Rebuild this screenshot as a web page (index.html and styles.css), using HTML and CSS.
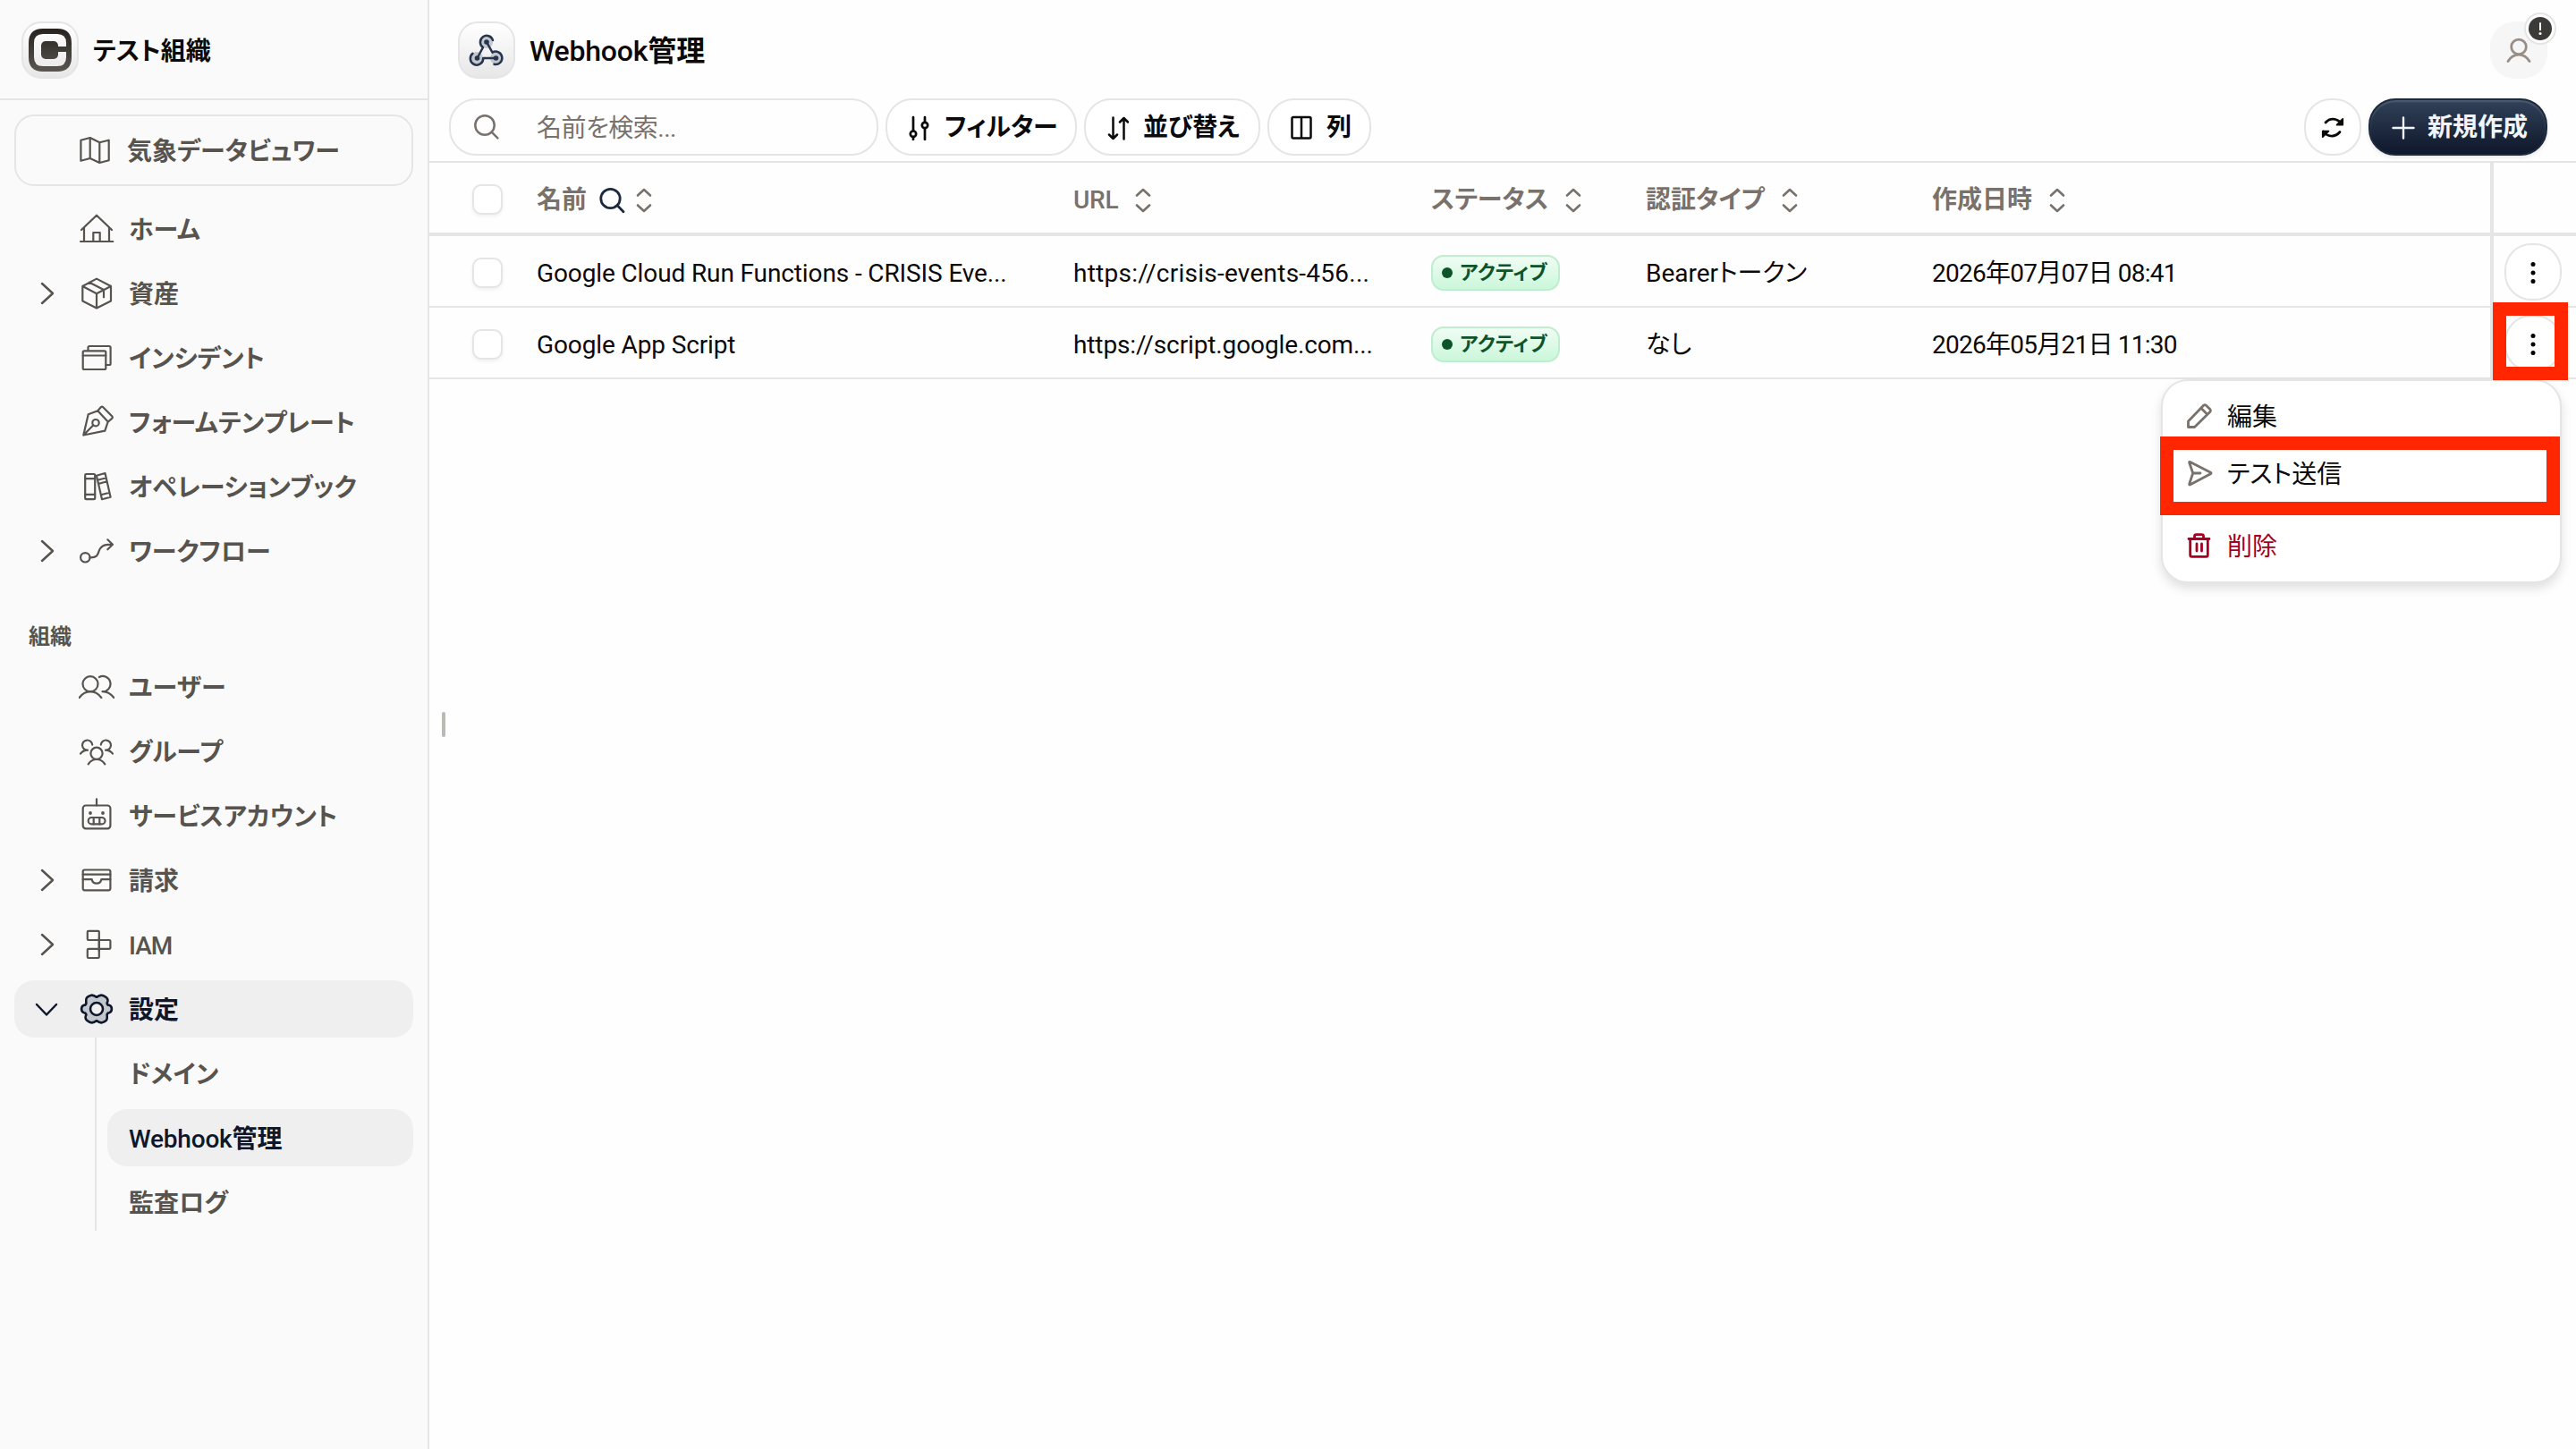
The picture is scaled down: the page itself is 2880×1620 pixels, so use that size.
FILE: index.html
```html
<!DOCTYPE html>
<html lang="ja">
<head>
    <meta charset="UTF-8">
    <meta name="viewport" content="width=device-width, initial-scale=1.0">
    <title>Webhook管理</title>
    <link rel="stylesheet" href="styles.css">
</head>
<body>
    <div class="app">
        <aside class="sidebar">
            <div class="org">
                <div class="org-logo">
                    <svg width="48" height="48" viewBox="0 0 48 48">
                        <defs>
                            <linearGradient id="logo" x1="0" y1="0" x2="0" y2="48" gradientUnits="userSpaceOnUse">
                                <stop offset="0" stop-color="#26231f"/>
                                <stop offset="1" stop-color="#5a5751"/>
                            </linearGradient>
                        </defs>
                        <path d="M45 20.5V16Q45 3 32 3H16Q3 3 3 16V32Q3 45 16 45H32Q45 45 45 32V23" fill="none" stroke="url(#logo)" stroke-width="6"/>
                        <rect x="14" y="14" width="19" height="20" rx="5" fill="url(#logo)"/>
                        <path d="M28 20H48V26H28Z" fill="url(#logo)"/>
                    </svg>
                </div>
                <span class="org-name">テスト組織</span>
            </div>

            <nav class="nav">
                <a class="nav-item nav-card">
                    <svg class="icon" viewBox="0 0 40 40"><path d="M4.4 8.7L14.7 6L25.3 11.3L35.7 8.7V31.3L25.3 34L14.7 29L4.4 31.7ZM14.7 6V29M25.3 11.3V34"/></svg>
                    <span>気象データビュワー</span>
                </a>
                <a class="nav-item">
                    <svg class="icon" viewBox="0 0 40 40"><path d="M3 21L20 4.7L37 21M6 18.5V34M34 18.5V34M2 34H38.3M16.3 34V24H23.7V34"/></svg>
                    <span>ホーム</span>
                </a>
                <a class="nav-item">
                    <svg class="chevron" viewBox="0 0 40 40"><path d="M15 9L27 20L15 31"/></svg>
                    <svg class="icon" viewBox="0 0 40 40"><path d="M20 3.6L36 12V28.6L20 36.6L4.3 28.6V12ZM4.3 12L20 20.3L36 12M20 20.3V36.6M12 7.7L28 16V24.3"/></svg>
                    <span>資産</span>
                </a>
                <a class="nav-item">
                    <svg class="icon" viewBox="0 0 40 40"><rect x="4.7" y="12.3" width="25.6" height="20.7" rx="1.5"/><path d="M4.7 17.5H30.3M10.5 12V8.5Q10.5 7 12 7H34Q35.6 7 35.6 8.5V26.5Q35.6 28 34 28H30.5"/></svg>
                    <span>インシデント</span>
                </a>
                <a class="nav-item">
                    <svg class="icon" viewBox="0 0 40 40"><path d="M5.3 34.5L10.7 11.3L21.3 7.3L32.7 19.5L29.3 29.7ZM21.3 7.3L25 3Q26 2 27 3L37.4 13.5Q38.4 14.7 37.4 15.6L32.7 19.8M5.3 34.5L16.4 23.2"/><circle cx="19" cy="20.7" r="3.7"/></svg>
                    <span>フォームテンプレート</span>
                </a>
                <a class="nav-item">
                    <svg class="icon" viewBox="0 0 40 40"><rect x="7.2" y="6" width="11" height="28.2" rx="1.2"/><path d="M7.2 11.2H18.2M7.2 28.8H18.2M19.9 7.7L29.5 5L35.6 31.8L26 34.2ZM21 12.8L30.7 10.2M22 17L31.5 14.2M24.8 29.3L34.4 26.8"/></svg>
                    <span>オペレーションブック</span>
                </a>
                <a class="nav-item">
                    <svg class="chevron" viewBox="0 0 40 40"><path d="M15 9L27 20L15 31"/></svg>
                    <svg class="icon" viewBox="0 0 40 40"><circle cx="7.3" cy="27.3" r="5.2"/><path d="M12.5 27.3C20.5 27.6 21.2 24.5 22.5 20.5C24.2 15 27.5 12.5 37.5 12.7M32.3 7.3L38 12.7L32.3 18.3"/></svg>
                    <span>ワークフロー</span>
                </a>

                <p class="nav-label">組織</p>
                <a class="nav-item">
                    <svg class="icon" viewBox="0 0 40 40"><circle cx="13" cy="16.7" r="8.5"/><path d="M.7 32Q6 25.2 13 25.2T25.3 32M22.9 9A8.6 8.6 0 1 1 26.5 25.2M26.5 25.2Q33.5 25 39.3 32"/></svg>
                    <span>ユーザー</span>
                </a>
                <a class="nav-item">
                    <svg class="icon" viewBox="0 0 40 40"><circle cx="20" cy="22.3" r="6.6"/><path d="M10.7 34.3Q14 29 20 29T29.3 34.3M15.2 12.6A5.6 5.6 0 1 0 10 18.7M24.8 12.6A5.6 5.6 0 1 1 30 18.7M10 18.7Q5 18.7 2 22.7M30 18.7Q35 18.7 38 22.7"/></svg>
                    <span>グループ</span>
                </a>
                <a class="nav-item">
                    <svg class="icon" viewBox="0 0 40 40"><rect x="4.7" y="8.5" width="30.7" height="25.8" rx="3.2"/><rect x="10.7" y="22" width="18.8" height="7.4" rx="3.7"/><path d="M20 1.3V8.5M16.7 22V29.4M23.3 22V29.4"/><circle class="dot" cx="13" cy="17" r="1.9"/><circle class="dot" cx="27" cy="17" r="1.9"/></svg>
                    <span>サービスアカウント</span>
                </a>
                <a class="nav-item">
                    <svg class="chevron" viewBox="0 0 40 40"><path d="M15 9L27 20L15 31"/></svg>
                    <svg class="icon" viewBox="0 0 40 40"><rect x="4.7" y="8.5" width="30.7" height="22.8" rx="2"/><path d="M4.7 13.7H35.3M4.7 19.2H14.7C15.2 22 17 23.7 20 23.7S24.8 22 25.3 19.2H35.3"/></svg>
                    <span>請求</span>
                </a>
                <a class="nav-item">
                    <svg class="chevron" viewBox="0 0 40 40"><path d="M15 9L27 20L15 31"/></svg>
                    <svg class="icon" viewBox="0 0 40 40"><rect x="9.8" y="4.8" width="13" height="10.2" rx="1"/><rect x="22.8" y="15" width="12.6" height="9.8" rx="1"/><rect x="9.8" y="24.8" width="13" height="10.2" rx="1"/><path d="M22.8 13V27"/></svg>
                    <span class="latin latin-tight">IAM</span>
                </a>
                <a class="nav-item nav-active">
                    <svg class="chevron" viewBox="0 0 40 40"><path d="M9 15L20 26.5L31 15"/></svg>
                    <svg class="icon" viewBox="0 0 40 40">
                        <path class="gear" fill-rule="evenodd" d="M31.6 13.4Q32 15.6 34 15.8Q36.9 16.6 36.9 20T34 24.2Q32 24.4 31.6 26.6Q32.2 31.6 30.6 33T25.2 35.4Q23 35.2 20 33.2Q17 35.2 14.8 35.4T9.4 33T8.4 26.6Q8 24.4 6 24.2Q3.1 23.4 3.1 20T6 15.8Q8 15.6 8.4 13.4Q7.8 8.4 9.4 7T14.8 4.6Q17 4.8 20 6.8Q23 4.8 25.2 4.6T30.6 7T31.6 13.4ZM27 20A7 7 0 1 0 13 20A7 7 0 1 0 27 20Z"/>
                    </svg>
                    <span>設定</span>
                </a>
                <div class="subnav">
                    <a class="nav-item">ドメイン</a>
                    <a class="nav-item nav-active"><span class="latin">Webhook</span>管理</a>
                    <a class="nav-item">監査ログ</a>
                </div>
            </nav>
        </aside>

        <main class="main">
            <header class="page-header">
                <div class="page-icon">
                    <svg width="40" height="40" viewBox="0 0 40 40">
                        <g fill="#c3c8d0"><circle cx="20" cy="11" r="7"/><circle cx="9" cy="29" r="7"/><circle cx="31" cy="29" r="7"/></g>
                        <g fill="none" stroke="#26344d" stroke-width="2.5" stroke-linecap="round" stroke-linejoin="round">
                            <path d="M27 9A7.2 7.2 0 1 0 16 17L9.5 29M20 11L26.5 22.6A7.2 7.2 0 1 1 28.5 35.8M31 29H16.2A7.2 7.2 0 1 1 4.5 23.8"/>
                        </g>
                        <g fill="#26344d"><circle cx="20" cy="11" r="2.8"/><circle cx="9.5" cy="29" r="2.8"/><circle cx="30.5" cy="29" r="2.8"/></g>
                    </svg>
                </div>
                <h1><span class="latin">Webhook</span>管理</h1>
                <div class="user">
                    <svg width="40" height="40" viewBox="0 0 40 40" fill="none" stroke="#968e87" stroke-width="2.8" stroke-linecap="round"><circle cx="20" cy="16.4" r="8.3"/><path d="M8 32.5Q12.5 25.2 20 25.2T32 32.5"/></svg>
                    <span class="user-badge">
                        <svg width="26" height="26" viewBox="0 0 26 26"><circle cx="13" cy="13" r="13" fill="#3b3a37"/><path d="M13 7V14.2" stroke="#fff" stroke-width="2" stroke-linecap="round"/><circle cx="13" cy="18.6" r="1.5" fill="#fff"/></svg>
                    </span>
                </div>
            </header>

            <div class="toolbar">
                <div class="search">
                    <svg width="32" height="32" viewBox="0 0 32 32" fill="none" stroke="currentColor" stroke-width="2.5" stroke-linecap="round"><circle cx="14" cy="14" r="10.7"/><path d="M21.6 21.6L28.4 28.4"/></svg>
                    <span>名前を検索...</span>
                </div>
                <button class="btn btn-filter">
                    <svg width="24" height="28" viewBox="0 0 24 28" fill="none" stroke="currentColor" stroke-width="2.7" stroke-linecap="round"><path d="M5 2V17M5 25V27M18 2V7M18 15V27"/><circle cx="5" cy="20.7" r="3.2"/><circle cx="18" cy="11" r="3.2"/></svg>
                    フィルター
                </button>
                <button class="btn btn-sort">
                    <svg width="24" height="28" viewBox="0 0 24 28" fill="none" stroke="currentColor" stroke-width="2.5" stroke-linecap="round" stroke-linejoin="round"><path d="M6.5 2.5V26M2 21.5L6.5 26L11 21.5M18.5 26.5V3M14 7.5L18.5 3L23 7.5"/></svg>
                    並び替え
                </button>
                <button class="btn btn-cols">
                    <svg width="24" height="28" viewBox="0 0 24 28" fill="none" stroke="currentColor" stroke-width="2.5"><rect x="1.5" y="2" width="21" height="23.5" rx="1.5"/><path d="M12 2V25.5"/></svg>
                    列
                </button>
                <button class="btn btn-refresh">
                    <svg width="32" height="32" viewBox="0 0 32 32" fill="none" stroke="currentColor" stroke-width="2.8" stroke-linecap="round" stroke-linejoin="round"><path d="M8 10C13 4.5 20 4.8 26 11M24 20.5C19 26.5 11 27 5.5 20"/><path d="M27.2 6V12.6H20.6ZM4.8 26V19.6H11.4Z" fill="currentColor" stroke-width="1.8"/></svg>
                </button>
                <button class="btn btn-new">
                    <svg width="26" height="26" viewBox="0 0 26 26" fill="none" stroke="currentColor" stroke-width="2.4" stroke-linecap="round"><path d="M13 1.5V24.5M1.5 13H24.5"/></svg>
                    新規作成
                </button>
            </div>

            <div class="table">
                <div class="row row-head">
                    <div class="check"><i></i></div>
                    <div class="cell">名前
                        <svg class="search-icon" width="32" height="32" viewBox="0 0 32 32"><circle cx="14.5" cy="14" r="10.7"/><path d="M22 21.6L29 28.8"/></svg>
                        <svg class="sort" viewBox="0 0 20 32"><path d="M3 10.5L10 4L17 10.5M3 21.5L10 28L17 21.5"/></svg>
                    </div>
                    <div class="cell"><span class="latin">URL</span>
                        <svg class="sort" viewBox="0 0 20 32"><path d="M3 10.5L10 4L17 10.5M3 21.5L10 28L17 21.5"/></svg>
                    </div>
                    <div class="cell">ステータス
                        <svg class="sort" viewBox="0 0 20 32"><path d="M3 10.5L10 4L17 10.5M3 21.5L10 28L17 21.5"/></svg>
                    </div>
                    <div class="cell">認証タイプ
                        <svg class="sort" viewBox="0 0 20 32"><path d="M3 10.5L10 4L17 10.5M3 21.5L10 28L17 21.5"/></svg>
                    </div>
                    <div class="cell">作成日時
                        <svg class="sort" viewBox="0 0 20 32"><path d="M3 10.5L10 4L17 10.5M3 21.5L10 28L17 21.5"/></svg>
                    </div>
                    <div class="actions"></div>
                </div>
                <div class="row">
                    <div class="check"><i></i></div>
                    <div class="cell name">Google Cloud Run Functions - CRISIS Eve...</div>
                    <div class="cell url-events">https://crisis-events-456...</div>
                    <div class="cell"><span class="status">アクティブ</span></div>
                    <div class="cell auth">Bearerトークン</div>
                    <div class="cell date">2026年07月07日 08:41</div>
                    <div class="actions">
                        <button class="btn btn-more"><svg width="8" height="28" viewBox="0 0 8 28"><circle cx="4" cy="4.5" r="2.5"/><circle cx="4" cy="14" r="2.5"/><circle cx="4" cy="23.5" r="2.5"/></svg></button>
                    </div>
                </div>
                <div class="row">
                    <div class="check"><i></i></div>
                    <div class="cell name">Google App Script</div>
                    <div class="cell name">https://script.google.com...</div>
                    <div class="cell"><span class="status">アクティブ</span></div>
                    <div class="cell auth">なし</div>
                    <div class="cell date">2026年05月21日 11:30</div>
                    <div class="actions">
                        <button class="btn btn-more"><svg width="8" height="28" viewBox="0 0 8 28"><circle cx="4" cy="4.5" r="2.5"/><circle cx="4" cy="14" r="2.5"/><circle cx="4" cy="23.5" r="2.5"/></svg></button>
                        <div class="mark mark-button"></div>
                        <div class="menu">
                            <a class="menu-item">
                                <svg width="32" height="32" viewBox="0 0 32 32"><path d="M3.5 28.5V22L20.6 4.2Q22 3 23.4 4.2L27.8 8.6Q29 10 27.8 11.4L10.5 28.5ZM17.8 7.2L25 14.4"/></svg>
                                <span>編集</span>
                            </a>
                            <a class="menu-item">
                                <svg width="32" height="32" viewBox="0 0 32 32"><path d="M5.6 3.5Q4.4 3 4.7 4.2L8.7 16L4.7 28Q4.4 29.4 5.8 28.8L28.5 16.8Q29.6 16 28.5 15.2ZM8.7 16H17"/></svg>
                                <span>テスト送信</span>
                                <div class="mark mark-item"></div>
                            </a>
                            <a class="menu-item menu-danger">
                                <svg width="32" height="32" viewBox="0 0 32 32"><path d="M4 8.5H27M5.7 9V26.5Q5.7 28.3 7.5 28.3H23.5Q25.3 28.3 25.3 26.5V9M10.5 8V5.5Q10.5 3.6 12.4 3.6H18.6Q20.5 3.6 20.5 5.5V8M13 14V22M18.5 14V22"/></svg>
                                <span>削除</span>
                            </a>
                        </div>
                    </div>
                </div>
            </div>
            <div class="resizer"></div>
        </main>
    </div>
</body>
</html>
```
FILE: styles.css
```css
* {
    box-sizing: border-box;
}
body {
    margin: 0;
    font-family: Roboto, "Noto Sans CJK JP", sans-serif;
    font-size: 28px;
    line-height: 40px;
    font-feature-settings: "palt";
    color: #0c0a09;
    background-color: #fefefe;
}
.app {
    display: flex;
    height: 1620px;
    overflow: hidden;
}
.latin {
    font-weight: 500;
    letter-spacing: -0.2px;
}
.latin-tight {
    letter-spacing: -1px;
}

/* sidebar */
.sidebar {
    width: 480px;
    flex-shrink: 0;
    background-color: #fafafa;
    border-right: 2px solid #e5e5e5;
    font-weight: 700;
}
.org {
    display: flex;
    align-items: center;
    gap: 16px;
    height: 112px;
    padding: 2px 0 0 24px;
    border-bottom: 2px solid #e5e5e5;
}
.org-name {
    padding-top: 4px;
}
.org-logo, .page-icon {
    display: flex;
    align-items: center;
    justify-content: center;
    width: 64px;
    height: 64px;
    border: 2px solid #e5e5e5;
    border-radius: 22px;
    background: linear-gradient(#ffffff, #e7e7e7);
}
.page-icon {
    width: 64px;
}
.nav {
    display: flex;
    flex-direction: column;
    gap: 8px;
    padding: 16px;
    color: #57534e;
}
.nav-item {
    display: flex;
    align-items: center;
    justify-content: flex-start;
    height: 64px;
    padding-left: 72px;
    border-radius: 22px;
    position: relative;
}
.nav-item > span {
    padding-top: 3px;
}
.nav-card {
    height: 80px;
    margin-bottom: 8px;
    padding-left: 68px;
    border: 2px solid #e5e5e5;
}
.icon, .chevron {
    width: 40px;
    height: 40px;
    fill: none;
    stroke: currentColor;
    stroke-width: 2.2;
    stroke-linecap: round;
    stroke-linejoin: round;
}
.icon {
    margin-right: 16px;
}
.icon .dot {
    fill: currentColor;
    stroke: none;
}
.icon .gear {
    fill: #c3c6cd;
    stroke-width: 2.6;
}
.chevron {
    position: absolute;
    left: 16px;
    stroke-width: 2.5;
}
.nav-label {
    margin: 0;
    height: 72px;
    padding: 39px 0 0 16px;
    font-size: 24px;
    line-height: 34px;
}
.nav-active {
    background-color: #efefef;
    color: #0f172b;
}
.subnav {
    display: flex;
    flex-direction: column;
    gap: 8px;
    margin: -8px 0 0 90px;
    padding: 8px 0 0 12px;
    border-left: 2px solid #e5e5e5;
}
.subnav .nav-item {
    padding: 3px 0 0 24px;
}
.subnav .nav-item > span {
    padding-top: 0;
}

/* page header */
.main {
    flex: 1;
    position: relative;
}
.page-header {
    display: flex;
    align-items: center;
    height: 110px;
    padding: 2px 32px 0;
}
h1 {
    margin: 0 0 0 16px;
    padding-top: 2px;
    font-size: 32px;
    font-weight: 700;
}
.user {
    display: flex;
    align-items: center;
    justify-content: center;
    position: relative;
    width: 64px;
    height: 64px;
    margin-left: auto;
    border-radius: 28px;
    background-color: #f6f6f6;
}
.user-badge {
    position: absolute;
    top: -10px;
    right: -10px;
    display: flex;
    align-items: center;
    justify-content: center;
    width: 36px;
    height: 36px;
    border: 2px solid #e5e5e5;
    border-radius: 50%;
    background-color: #ffffff;
}

/* toolbar */
.toolbar {
    display: flex;
    gap: 8px;
    height: 72px;
    padding: 0 32px 0 22px;
    border-bottom: 2px solid #e5e5e5;
}
.search {
    display: flex;
    align-items: center;
    gap: 40px;
    width: 480px;
    height: 64px;
    padding-left: 24px;
    border: 2px solid #e5e5e5;
    border-radius: 30px;
    color: #79716b;
    letter-spacing: -0.5px;
}
.search span {
    padding-top: 3px;
}
.btn {
    display: flex;
    align-items: center;
    gap: 16px;
    height: 64px;
    padding: 2px 0 0 24px;
    border: 2px solid #e5e5e5;
    border-radius: 30px;
    background-color: #ffffff;
    color: #0c0a09;
    font-family: inherit;
    font-size: 28px;
    font-weight: 700;
    line-height: 40px;
    font-feature-settings: inherit;
    white-space: nowrap;
}
.btn-filter {
    width: 214px;
}
.btn-sort {
    width: 197px;
}
.btn-cols {
    width: 116px;
}
.btn-refresh, .btn-more {
    justify-content: center;
    width: 64px;
    padding-left: 0;
}
.btn-refresh {
    margin-left: auto;
}
.btn-new {
    gap: 14px;
    width: 200px;
    border-color: #1d293d;
    background: linear-gradient(#314158, #0f172b);
    box-shadow: inset 0 2px 2px rgba(255, 255, 255, 0.15), 0 2px 4px rgba(0, 0, 0, 0.1);
    color: #f1f5f9;
}

/* table */
.row {
    display: grid;
    grid-template-columns: 112px 600px 400px 240px 320px 632px 1fr;
    height: 80px;
    border-bottom: 2px solid #e5e5e5;
}
.row-head {
    height: 82px;
    border-bottom-width: 4px;
    color: #79716b;
    font-weight: 700;
}
.check {
    display: flex;
    align-items: center;
    padding: 2px 0 0 48px;
}
.row-head .check {
    padding-top: 0;
}
.check i {
    width: 34px;
    height: 34px;
    border: 2px solid #e5e5e5;
    border-radius: 10px;
    background-color: #ffffff;
    box-shadow: 0 2px 4px rgba(0, 0, 0, 0.06);
}
.cell {
    display: flex;
    align-items: center;
    padding: 2px 0 0 8px;
    white-space: nowrap;
}
.name, .url-events, .auth, .date {
    padding-top: 4px;
}
.name {
    letter-spacing: -0.12px;
}
.url-events {
    letter-spacing: 0.25px;
}
.date {
    letter-spacing: -0.75px;
}
.search-icon {
    margin-left: 12px;
    fill: none;
    stroke: #1d293d;
    stroke-width: 2.8;
    stroke-linecap: round;
}
.sort {
    width: 20px;
    height: 32px;
    margin-left: 18px;
    fill: none;
    stroke: #79716b;
    stroke-width: 2.6;
    stroke-linecap: round;
    stroke-linejoin: round;
}
.search-icon + .sort {
    margin-left: 10px;
}
.status {
    display: flex;
    align-items: center;
    gap: 8px;
    width: 144px;
    height: 40px;
    padding-left: 10px;
    border: 2px solid #c0edcf;
    border-radius: 14px;
    background: linear-gradient(#f0fdf4, #cbf7da);
    color: #0d542b;
    font-size: 22px;
    font-weight: 700;
    letter-spacing: 0.4px;
}
.status::before {
    content: "";
    width: 12px;
    height: 12px;
    border-radius: 50%;
    background-color: #0d542b;
}
.actions {
    position: relative;
    display: flex;
    align-items: center;
    justify-content: center;
    height: 80px;
    padding-right: 4px;
    border-left: 4px solid #e5e5e5;
}
.row-head .actions {
    height: 82px;
}

/* row menu */
.menu {
    position: absolute;
    top: 80px;
    right: 16px;
    width: 448px;
    height: 228px;
    padding: 7px 8px;
    border: 2px solid #e5e5e5;
    border-radius: 30px;
    background-color: #ffffff;
    box-shadow: 0 6px 12px rgba(0, 0, 0, 0.12);
}
.menu-item {
    position: relative;
    display: flex;
    align-items: center;
    gap: 15px;
    height: 64px;
    padding-left: 17px;
}
.menu-item span {
    padding-top: 4px;
}
.menu-item svg {
    fill: none;
    stroke: #79716b;
    stroke-width: 2.8;
    stroke-linecap: round;
    stroke-linejoin: round;
}
.menu-danger {
    margin-top: 17px;
    color: #a50021;
}
.menu-danger svg {
    stroke: #a50021;
}
.mark {
    position: absolute;
    border: 15px solid #ff2600;
    z-index: 1;
}
.mark-button {
    top: -6px;
    left: -1px;
    width: 84px;
    height: 87px;
}
.mark-item {
    top: -9px;
    left: -11px;
    width: 447px;
    height: 88px;
}
.resizer {
    position: absolute;
    top: 796px;
    left: 14px;
    width: 4px;
    height: 28px;
    border-radius: 2px;
    background-color: #bcb8b3;
}
```
